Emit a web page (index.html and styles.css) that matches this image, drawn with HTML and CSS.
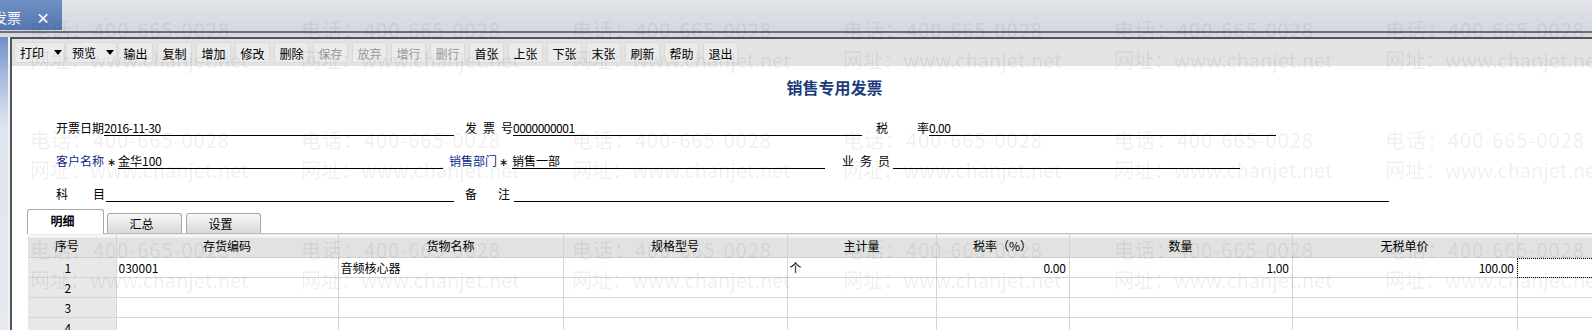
FILE: index.html
```html
<!DOCTYPE html>
<html lang="zh-CN">
<head>
  <meta charset="UTF-8" />
  <title>销售专用发票</title>
  <link rel="stylesheet" href="styles.css">
</head>
<body>
  <div class="tabbar">
    <div class="doc-tab"><span class="doc-name">发票</span><span class="close">×</span></div>
  </div>
  <div class="sep"></div>

  <div class="frame">
    <div class="side"></div>
    <div class="work">
      <div class="toolbar">
        <span class="btn drop">打印<i class="arrow"></i></span>
        <span class="btn drop">预览<i class="arrow"></i></span>
        <span class="btn">输出</span>
        <span class="btn">复制</span>
        <span class="btn">增加</span>
        <span class="btn">修改</span>
        <span class="btn">删除</span>
        <span class="btn off">保存</span>
        <span class="btn off">放弃</span>
        <span class="btn off">增行</span>
        <span class="btn off">删行</span>
        <span class="btn">首张</span>
        <span class="btn">上张</span>
        <span class="btn">下张</span>
        <span class="btn">末张</span>
        <span class="btn">刷新</span>
        <span class="btn">帮助</span>
        <span class="btn">退出</span>
      </div>

      <div class="sheet">
        <h1 class="title">销售专用发票</h1>

        <div class="form">
          <div class="row">
            <span class="lbl">开票日期</span>
            <span class="field f-date num">2016-11-30</span>
            <span class="lbl spread l-no">发 票 号</span>
            <span class="field f-no num">0000000001</span>
            <span class="lbl spread l-tax">税 率</span>
            <span class="field f-tax num">0.00</span>
          </div>
          <div class="row">
            <span class="lbl req">客户名称</span>
            <span class="star">∗</span>
            <span class="field f-cust">金华100</span>
            <span class="lbl req l-dept">销售部门</span>
            <span class="star s-dept">∗</span>
            <span class="field f-dept">销售一部</span>
            <span class="lbl spread l-sales">业 务 员</span>
            <span class="field f-sales"></span>
          </div>
          <div class="row">
            <span class="lbl spread l-subj">科 目</span>
            <span class="field f-subj"></span>
            <span class="lbl spread l-memo">备 注</span>
            <span class="field f-memo"></span>
          </div>
        </div>

        <div class="tabs">
          <span class="tab active">明细</span>
          <span class="tab">汇总</span>
          <span class="tab">设置</span>
        </div>

        <table class="grid">
          <colgroup>
            <col class="c-idx"><col class="c-code"><col class="c-name"><col class="c-spec">
            <col class="c-unit"><col class="c-rate"><col class="c-qty"><col class="c-price"><col class="c-more">
          </colgroup>
          <thead>
            <tr>
              <th class="idx">序号</th>
              <th>存货编码</th>
              <th>货物名称</th>
              <th>规格型号</th>
              <th>主计量</th>
              <th>税率（%）</th>
              <th>数量</th>
              <th>无税单价</th>
              <th></th>
            </tr>
          </thead>
          <tbody>
            <tr>
              <td class="idx">1</td>
              <td>030001</td>
              <td>音频核心器</td>
              <td></td>
              <td>个</td>
              <td class="r">0.00</td>
              <td class="r">1.00</td>
              <td class="r">100.00</td>
              <td class="focus"></td>
            </tr>
            <tr><td class="idx">2</td><td></td><td></td><td></td><td></td><td></td><td></td><td></td><td></td></tr>
            <tr><td class="idx">3</td><td></td><td></td><td></td><td></td><td></td><td></td><td></td><td></td></tr>
            <tr><td class="idx">4</td><td></td><td></td><td></td><td></td><td></td><td></td><td></td><td></td></tr>
          </tbody>
        </table>
      </div>
    </div>
  </div>

  <div class="watermark">
    <div class="wm"><p class="tel">电话：400-665-0028</p><p>网址：www.chanjet.net</p></div>
    <div class="wm"><p class="tel">电话：400-665-0028</p><p>网址：www.chanjet.net</p></div>
    <div class="wm"><p class="tel">电话：400-665-0028</p><p>网址：www.chanjet.net</p></div>
    <div class="wm"><p class="tel">电话：400-665-0028</p><p>网址：www.chanjet.net</p></div>
    <div class="wm"><p class="tel">电话：400-665-0028</p><p>网址：www.chanjet.net</p></div>
    <div class="wm"><p class="tel">电话：400-665-0028</p><p>网址：www.chanjet.net</p></div>
    <div class="wm"><p class="tel">电话：400-665-0028</p><p>网址：www.chanjet.net</p></div>
    <div class="wm"><p class="tel">电话：400-665-0028</p><p>网址：www.chanjet.net</p></div>
    <div class="wm"><p class="tel">电话：400-665-0028</p><p>网址：www.chanjet.net</p></div>
    <div class="wm"><p class="tel">电话：400-665-0028</p><p>网址：www.chanjet.net</p></div>
    <div class="wm"><p class="tel">电话：400-665-0028</p><p>网址：www.chanjet.net</p></div>
    <div class="wm"><p class="tel">电话：400-665-0028</p><p>网址：www.chanjet.net</p></div>
    <div class="wm"><p class="tel">电话：400-665-0028</p><p>网址：www.chanjet.net</p></div>
    <div class="wm"><p class="tel">电话：400-665-0028</p><p>网址：www.chanjet.net</p></div>
    <div class="wm"><p class="tel">电话：400-665-0028</p><p>网址：www.chanjet.net</p></div>
    <div class="wm"><p class="tel">电话：400-665-0028</p><p>网址：www.chanjet.net</p></div>
    <div class="wm"><p class="tel">电话：400-665-0028</p><p>网址：www.chanjet.net</p></div>
    <div class="wm"><p class="tel">电话：400-665-0028</p><p>网址：www.chanjet.net</p></div>
  </div>
</body>
</html>
```

FILE: styles.css
```css
html, body {
  margin: 0;
  padding: 0;
  width: 100%;
  height: 100%;
  overflow: hidden;
  background: #fff;
  font-family: "Noto Sans CJK SC", sans-serif;
  font-size: 12px;
  color: #000;
}
body {
  position: relative;
}

/* top document tabs */
.tabbar {
  height: 31px;
  background: linear-gradient(to bottom, #e2e5e9, #d3d7df);
}
.doc-tab {
  width: 62px;
  height: 30px;
  display: flex;
  align-items: center;
  overflow: hidden;
  background: linear-gradient(to bottom, #6e90c5, #5476ad);
  color: #fff;
  font-size: 14px;
}
.doc-name {
  margin-left: -7px;
  padding-top: 3px;
}
.close {
  margin-left: 15px;
  padding-top: 3px;
  font-size: 14px;
  font-weight: bold;
}
.sep {
  height: 4px;
  border-top: 2px solid #6b7079;
  background: #d7dade;
}

.frame {
  display: flex;
  height: 293px;
}
.side {
  width: 8px;
  border-right: 2px solid #eef1f5;
  background: linear-gradient(to bottom, #6f8fc4, #a9bcdc 40px, #dfe5ee 90px, #e6e9ee);
}
.work {
  flex: 1;
  border-top: 2px solid #50545b;
  border-left: 2px solid #50545b;
  overflow: hidden;
}

/* toolbar */
.toolbar {
  height: 27px;
  display: flex;
  align-items: center;
  padding-left: 2px;
  background: #e3e3e3;
  white-space: nowrap;
}
.btn {
  box-sizing: border-box;
  width: 35px;
  height: 21px;
  line-height: 21px;
  margin-right: 4px;
  text-align: center;
  background: #ebebeb;
  border: 1px solid #dadada;
  border-radius: 2px;
  flex-shrink: 0;
}
.btn.drop {
  width: 51px;
  margin-right: 1px;
  padding-left: 5px;
  text-align: left;
  display: flex;
  align-items: center;
}
.arrow {
  width: 0;
  height: 0;
  margin-left: 10px;
  border-left: 4px solid transparent;
  border-right: 4px solid transparent;
  border-top: 5px solid #000;
}
.btn.off {
  color: #9a9a9a;
}

/* invoice sheet */
.sheet {
  background: #fff;
}
.title {
  margin: 11px 0 0;
  padding-left: 65px;
  height: 20px;
  line-height: 20px;
  text-align: center;
  font-size: 16px;
  font-weight: bold;
  color: #1b3c79;
}

.form {
  padding: 19px 0 0 44px;
}
.row {
  display: flex;
  align-items: flex-end;
  height: 20px;
  margin-bottom: 13px;
}
.row:last-child {
  margin-bottom: 0;
}
.lbl {
  width: 48px;
  flex-shrink: 0;
  line-height: 14px;
  padding-bottom: 1px;
  white-space: nowrap;
}
.lbl.spread {
  text-align: justify;
  text-align-last: justify;
}
.lbl.req {
  color: #0c1f8a;
}
.star {
  width: 14px;
  flex-shrink: 0;
  line-height: 14px;
  padding-bottom: 1px;
  padding-right: 2px;
  box-sizing: border-box;
  text-align: right;
  font-size: 11px;
}
.s-dept {
  width: 15px;
  padding-right: 4px;
}
.field {
  flex-shrink: 0;
  height: 15px;
  line-height: 14px;
  box-sizing: border-box;
  border-bottom: 1px solid #000;
  white-space: nowrap;
}
.num {
  letter-spacing: -0.5px;
}

.f-date { width: 350px; }
.l-no { margin-left: 11px; }
.f-no { width: 349px; }
.l-tax { margin-left: 14px; width: 53px; }
.f-tax { width: 347px; }

.f-cust { width: 325px; }
.l-dept { margin-left: 6px; }
.f-dept { width: 313px; }
.l-sales { margin-left: 17px; }
.f-sales { margin-left: 3px; width: 347px; }

.l-subj { width: 49px; }
.f-subj { margin-left: 1px; width: 348px; }
.l-memo { margin-left: 11px; width: 45px; }
.f-memo { margin-left: 4px; width: 875px; }

/* detail tabs */
.tabs {
  display: flex;
  align-items: flex-end;
  height: 24px;
  margin-top: 7px;
  padding-left: 15px;
}
.tab {
  box-sizing: border-box;
  width: 75px;
  height: 20px;
  margin-left: 3px;
  padding-right: 6px;
  line-height: 19px;
  text-align: center;
  border: 1px solid #a9a9a9;
  border-bottom: none;
  border-radius: 3px 3px 0 0;
  background: linear-gradient(to bottom, #f7f7f7, #d9d9d9);
}
.tab:nth-child(3) {
  margin-left: 4px;
}
.tab.active {
  position: relative;
  width: 77px;
  height: 25px;
  margin: 0 0 -1px 0;
  line-height: 22px;
  font-weight: bold;
  background: #fff;
}

/* detail grid */
.grid {
  margin-left: 16px;
  border-collapse: collapse;
  table-layout: fixed;
  width: 1608px;
  border-top: 1px solid #bdbdbd;
}
.c-idx { width: 88px; }
.c-code { width: 222px; }
.c-name { width: 225px; }
.c-spec { width: 224px; }
.c-unit { width: 149px; }
.c-rate { width: 133px; }
.c-qty { width: 223px; }
.c-price { width: 225px; }
.c-more { width: 119px; }

.grid th {
  height: 23px;
  padding: 0;
  font-weight: normal;
  background: linear-gradient(to bottom, #f6f6f6 0, #f6f6f6 3px, #e2e2e2 3px);
  border-left: 1px solid #d3d3d3;
  border-bottom: 1px solid #cfcfcf;
}
.grid td {
  height: 19px;
  padding: 0 2px;
  line-height: 19px;
  white-space: nowrap;
  border: 1px solid #d6d6d6;
  border-top: none;
}
.grid td.r {
  text-align: right;
  padding-right: 3px;
  letter-spacing: -0.3px;
}
.grid .idx {
  text-align: center;
  padding-right: 10px;
  background: #e8e8e8;
  border-left: none;
}
.grid th.idx {
  background: linear-gradient(to bottom, #f6f6f6 0, #f6f6f6 3px, #e2e2e2 3px);
}
.grid td.focus {
  outline: 1px dotted #000;
  outline-offset: -1px;
}

/* watermark overlay */
.watermark {
  position: absolute;
  top: 0;
  left: 0;
  display: grid;
  grid-template-columns: repeat(6, 271px);
  grid-auto-rows: 110px;
  padding: 15px 0 0 30px;
  pointer-events: none;
  color: rgba(0, 0, 0, 0.075);
  font-size: 20px;
  white-space: nowrap;
}
.wm p {
  margin: 0;
  height: 30px;
  line-height: 30px;
}
.wm .tel {
  letter-spacing: 1px;
}
```
